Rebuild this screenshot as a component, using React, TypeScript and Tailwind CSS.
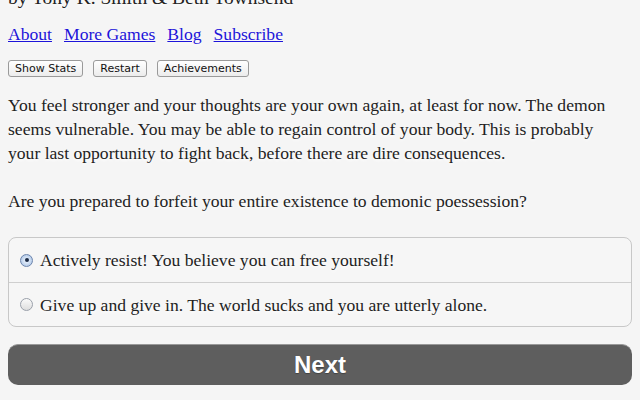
import { useState } from 'react';

const serif = { fontFamily: '"Liberation Serif", "DejaVu Serif", serif' };

const choices = [
  'Actively resist! You believe you can free yourself!',
  'Give up and give in. The world sucks and you are utterly alone.',
];

export default function App() {
  const [picked, setPicked] = useState(0);

  return (
    <div className="h-[400px] w-[640px] overflow-hidden bg-[#f5f5f5] text-[#222]" style={serif}>
      <div className="px-2 text-[17.6px] leading-6 [text-shadow:0_2px_3px_rgba(255,255,255,0.9)]">
        <div className="-mt-[14px] h-[24px] text-[19.5px]">by Tony K. Smith &amp; Beth Townsend</div>

        <div className="mt-[12px] flex gap-[12px] text-[#1d14d9]">
          <a className="underline" href="#">About</a>
          <a className="underline" href="#">More Games</a>
          <a className="underline" href="#">Blog</a>
          <a className="underline" href="#">Subscribe</a>
        </div>

        <div className="mt-[14px] flex gap-[10px]" style={{ fontFamily: '"DejaVu Sans", "Liberation Sans", sans-serif' }}>
          {['Show Stats', 'Restart', 'Achievements'].map((b) => (
            <button
              key={b}
              className="h-[17px] rounded-[3px] border border-[#9a9a9a] bg-gradient-to-b from-white to-[#ececec] px-[6px] text-[11px] leading-[15px] text-[#111]"
            >
              {b}
            </button>
          ))}
        </div>

        <p className="mt-[16px] max-w-[610px]">
          You feel stronger and your thoughts are your own again, at least for now. The demon seems vulnerable.
          You may be able to regain control of your body. This is probably your last opportunity to fight back,
          before there are dire consequences.
        </p>

        <p className="mt-[24px]">Are you prepared to forfeit your entire existence to demonic poessession?</p>

        <div className="mt-[24px] rounded-[8px] border border-[#c8c8c8] bg-[#f6f6f6]">
          {choices.map((c, i) => (
            <label
              key={c}
              className={`flex h-[44px] items-center gap-[7px] pl-[11px] ${i > 0 ? 'border-t border-[#cfcfcf]' : ''}`}
            >
              <span
                onClick={() => setPicked(i)}
                className="flex h-[13px] w-[13px] items-center justify-center rounded-full border border-[#9aa0aa] bg-gradient-to-b from-[#fafafa] to-[#dedede]"
                style={picked === i ? { background: 'radial-gradient(circle, #dbe7f7 30%, #9fbbe0 100%)', borderColor: '#6d85ad' } : undefined}
              >
                {picked === i && <span className="h-[4px] w-[4px] rounded-full bg-[#1b2a44]" />}
              </span>
              <span>{c}</span>
            </label>
          ))}
        </div>

        <button
          className="mt-[17px] flex h-[41px] w-full items-center justify-center rounded-[10px] border-t border-[#999] bg-[#5e5e5e] text-[24px] font-bold text-white [text-shadow:0_1px_1px_rgba(0,0,0,0.3)]"
          style={{ fontFamily: '"Liberation Sans", Arial, sans-serif' }}
        >
          Next
        </button>
      </div>
    </div>
  );
}
